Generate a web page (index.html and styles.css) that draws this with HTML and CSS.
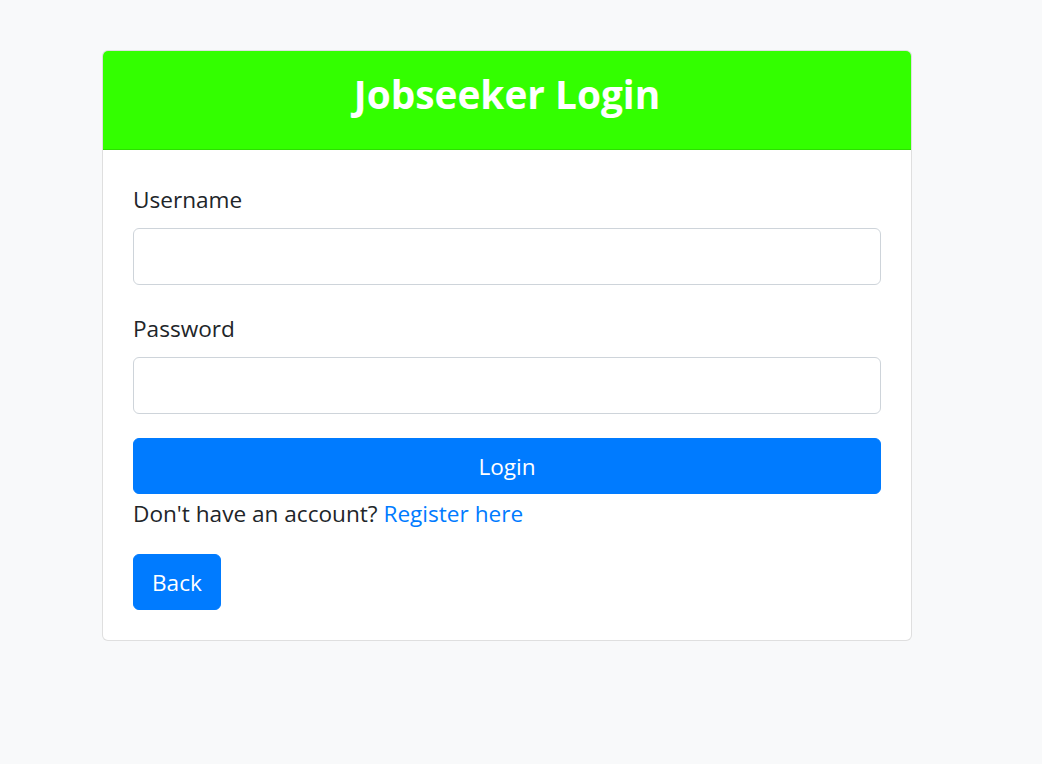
FILE: index.html
```html
<!DOCTYPE html>
<html lang="en">
<head>
<meta charset="utf-8">
<title>Jobseeker Login</title>
<link rel="stylesheet" href="styles.css">
</head>
<body>
<div class="page">
  <div class="card">
    <div class="card-header">
      <h3 class="title">Jobseeker Login</h3>
    </div>
    <div class="card-body">
      <form class="form">
        <div class="form-group">
          <label class="label" for="username">Username</label>
          <input class="input" id="username" type="text">
        </div>
        <div class="form-group">
          <label class="label" for="password">Password</label>
          <input class="input" id="password" type="password">
        </div>
        <button class="btn btn-block" type="button">Login</button>
      </form>
      <p class="note">Don't have an account? <a class="link" href="#">Register here</a></p>
      <button class="btn" type="button">Back</button>
    </div>
  </div>
</div>
</body>
</html>
```
FILE: styles.css
```css
* { box-sizing: border-box; }
html, body { margin: 0; padding: 0; }
body {
  background: #f8f9fa;
  color: #212529;
  font-family: "Open Sans", "Noto Sans", sans-serif;
  font-size: 22.6px;
  line-height: 36px;
  height: 764px;
}
.page {
  padding: 50px 0 0 102px;
}
.card {
  width: 810px;
  background: #fff;
  border: 1px solid rgba(0,0,0,0.125);
  border-radius: 6px;
  overflow: hidden;
}
.card-header {
  background: #33ff00;
  border-bottom: 1px solid rgba(0,0,0,0.125);
  padding: 18px 30px;
  text-align: center;
}
.title {
  margin: 0 0 12px;
  font-size: 38.8px;
  line-height: 50px;
  font-weight: 700;
  color: #fff;
}
.card-body {
  padding: 30px;
}
.form-group { margin-bottom: 24px; }
.label {
  display: block;
  padding-top: 2px;
  margin-bottom: 10px;
}
.input {
  display: block;
  width: 100%;
  height: 57px;
  border: 1px solid #ced4da;
  border-radius: 6px;
  background: #fff;
  font: inherit;
  padding: 9px 18px;
}
.btn {
  display: inline-block;
  font: inherit;
  color: #fff;
  background: #007bff;
  border: 1px solid #007bff;
  border-radius: 6px;
  height: 56px;
  padding: 10px 18px 8px;
  line-height: 36px;
  cursor: pointer;
}
.btn-block { display: block; width: 100%; }
.note { margin: 0 0 22px; padding-top: 2px; }
.link { color: #007bff; text-decoration: none; }
```
